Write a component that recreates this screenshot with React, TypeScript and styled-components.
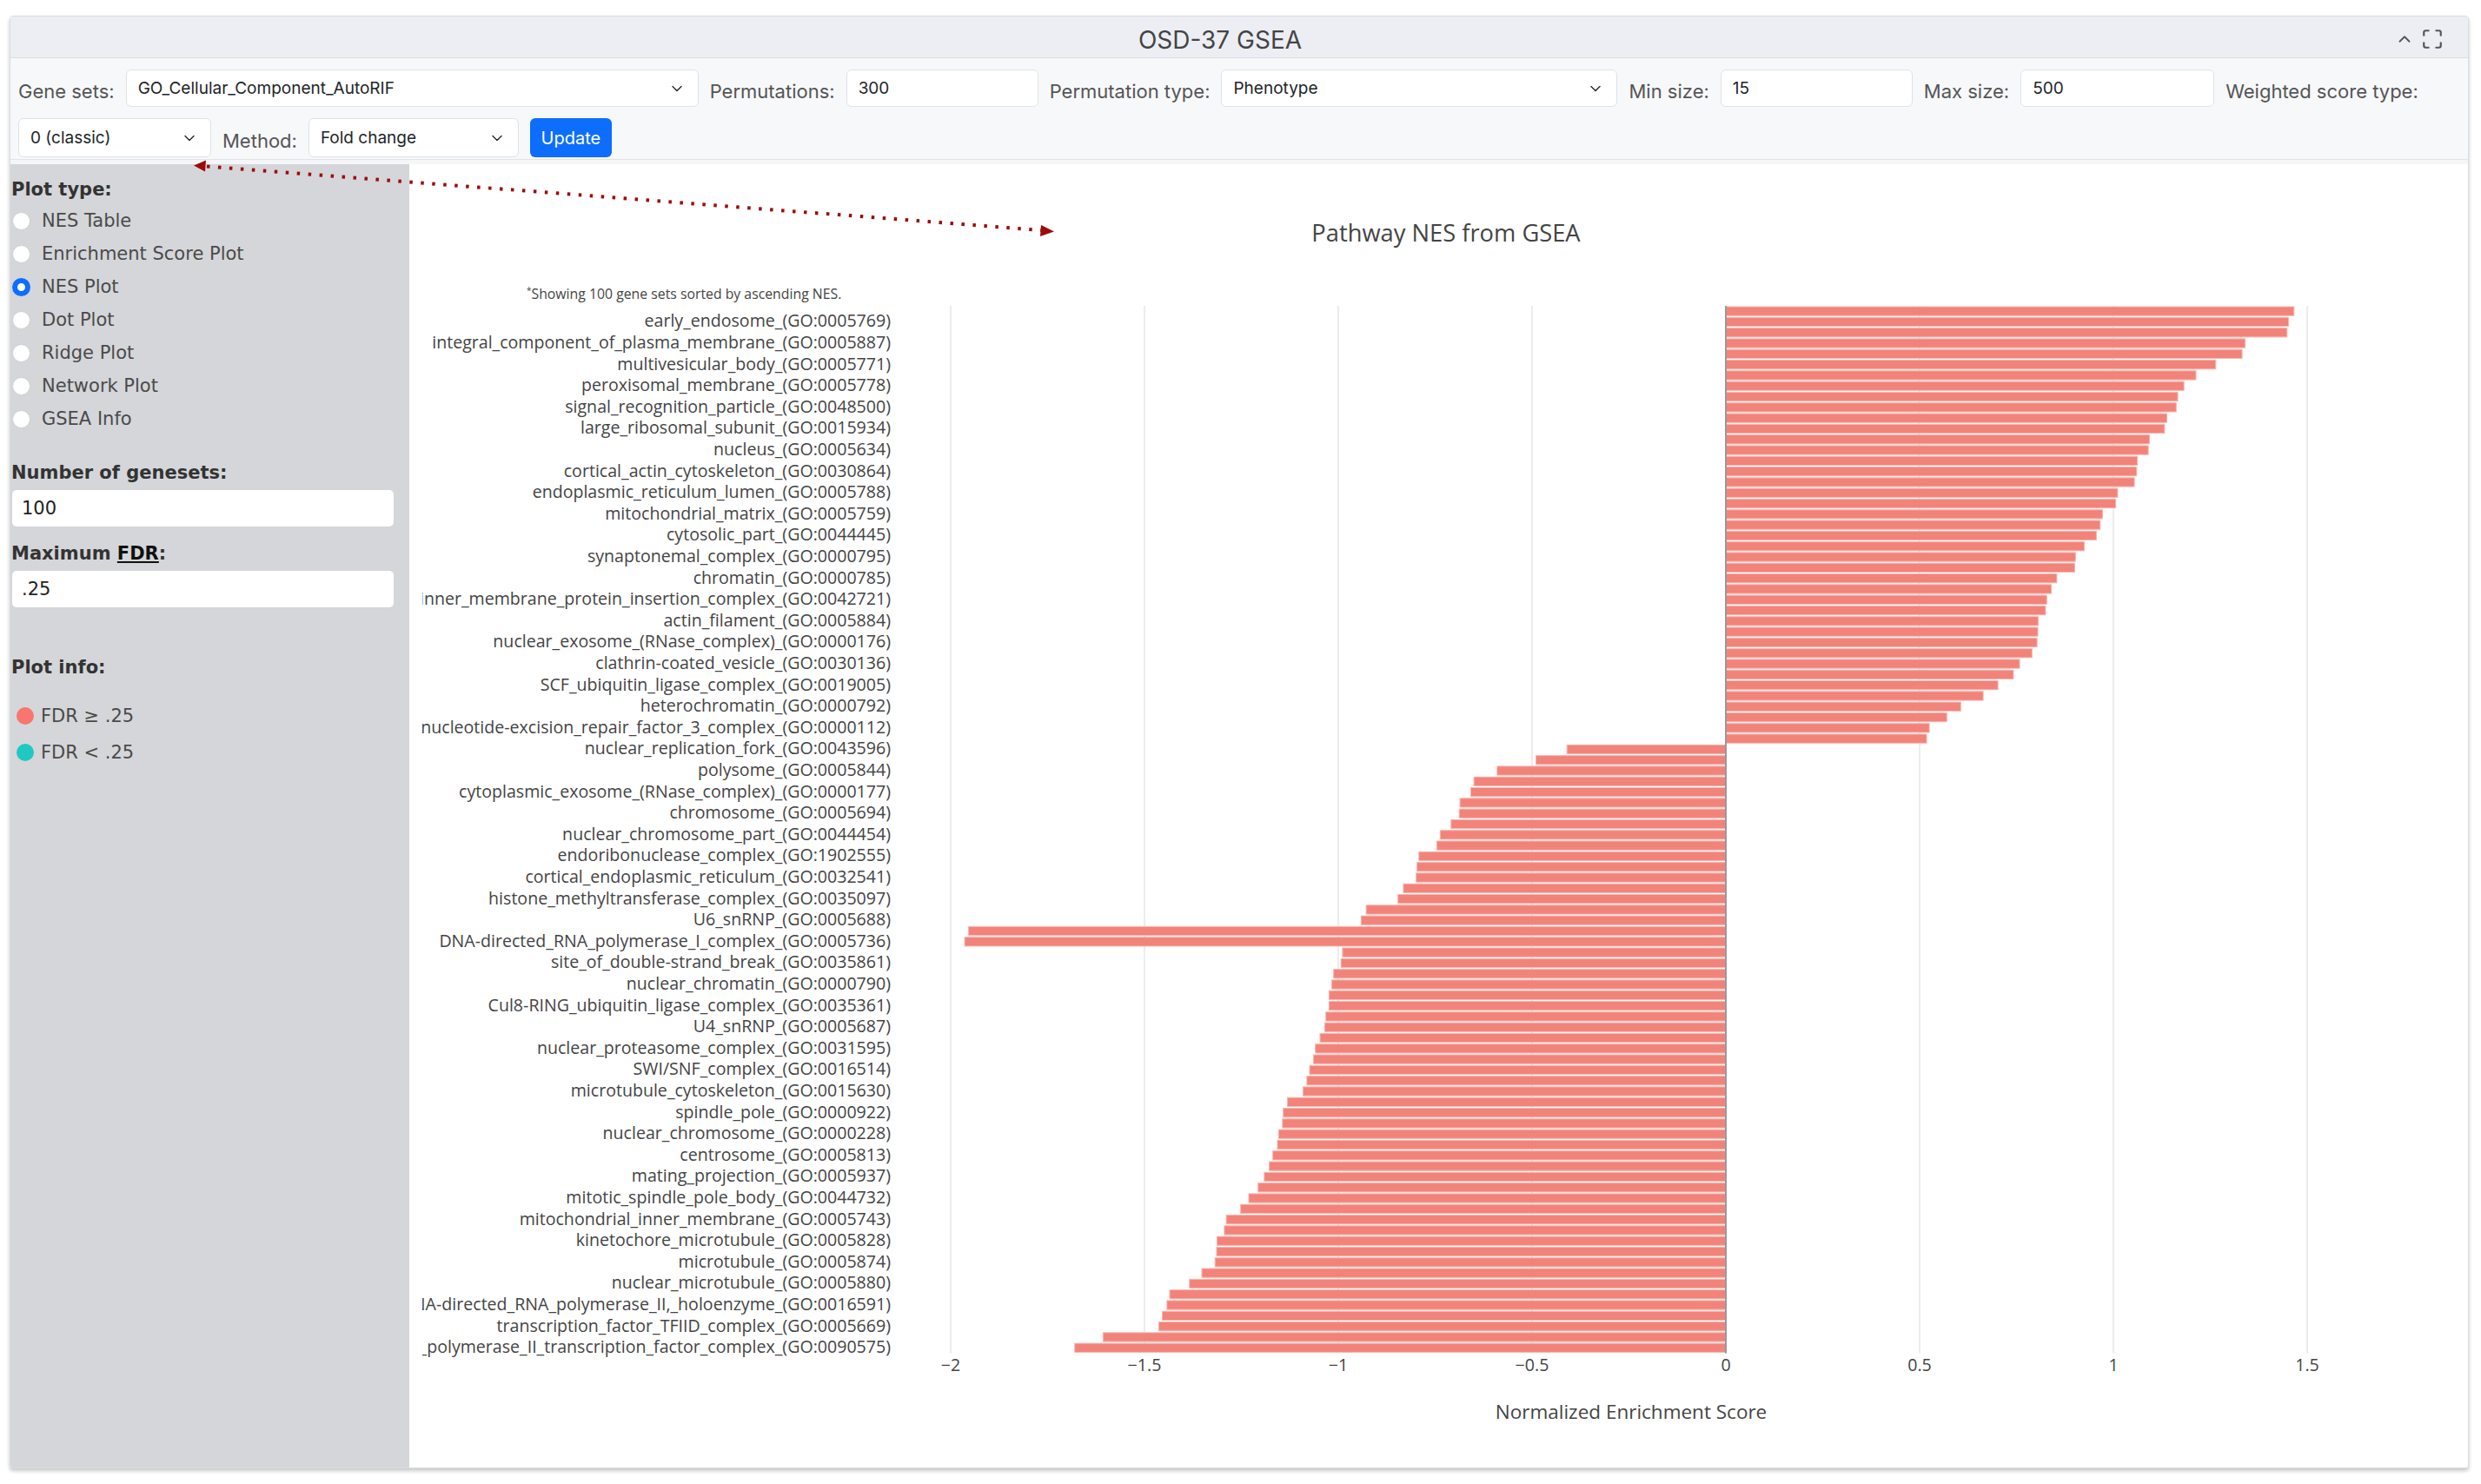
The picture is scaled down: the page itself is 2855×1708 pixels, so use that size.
import React from 'react';
import styled, { createGlobalStyle } from 'styled-components';
import { ChevronDown, ChevronUp, Maximize } from 'lucide-react';

const GlobalStyle = createGlobalStyle`
  html, body {
    margin: 0;
    padding: 0;
    background: #fff;
  }
  body {
    font-family: Inter, "Liberation Sans", sans-serif;
  }
  * {
    box-sizing: border-box;
  }
`;

// NES values, top bar first (ascending NES from the bottom)
const nes = [
  1.466, 1.452, 1.448, 1.34, 1.332, 1.264, 1.213, 1.182, 1.166, 1.162, 1.138, 1.132, 1.093, 1.09,
  1.062, 1.06, 1.054, 1.011, 1.006, 0.972, 0.966, 0.956, 0.925, 0.902, 0.9, 0.854, 0.84, 0.828,
  0.825, 0.806, 0.805, 0.803, 0.79, 0.758, 0.742, 0.702, 0.664, 0.606, 0.57, 0.525, 0.518,
  -0.41, -0.49, -0.59, -0.65, -0.658, -0.686, -0.688, -0.709, -0.737, -0.746, -0.792, -0.797,
  -0.799, -0.832, -0.846, -0.928, -0.941, -1.954, -1.964, -0.989, -0.993, -1.012, -1.017, -1.024,
  -1.024, -1.032, -1.035, -1.047, -1.059, -1.064, -1.074, -1.081, -1.091, -1.131, -1.142, -1.144,
  -1.154, -1.157, -1.169, -1.178, -1.191, -1.207, -1.231, -1.252, -1.289, -1.294, -1.313, -1.314,
  -1.318, -1.352, -1.384, -1.435, -1.442, -1.454, -1.463, -1.607, -1.68,
];

// every second bar gets a tick label, starting at the second bar from the top
const pathways = [
  'early_endosome_(GO:0005769)',
  'integral_component_of_plasma_membrane_(GO:0005887)',
  'multivesicular_body_(GO:0005771)',
  'peroxisomal_membrane_(GO:0005778)',
  'signal_recognition_particle_(GO:0048500)',
  'large_ribosomal_subunit_(GO:0015934)',
  'nucleus_(GO:0005634)',
  'cortical_actin_cytoskeleton_(GO:0030864)',
  'endoplasmic_reticulum_lumen_(GO:0005788)',
  'mitochondrial_matrix_(GO:0005759)',
  'cytosolic_part_(GO:0044445)',
  'synaptonemal_complex_(GO:0000795)',
  'chromatin_(GO:0000785)',
  'inner_membrane_protein_insertion_complex_(GO:0042721)',
  'actin_filament_(GO:0005884)',
  'nuclear_exosome_(RNase_complex)_(GO:0000176)',
  'clathrin-coated_vesicle_(GO:0030136)',
  'SCF_ubiquitin_ligase_complex_(GO:0019005)',
  'heterochromatin_(GO:0000792)',
  'nucleotide-excision_repair_factor_3_complex_(GO:0000112)',
  'nuclear_replication_fork_(GO:0043596)',
  'polysome_(GO:0005844)',
  'cytoplasmic_exosome_(RNase_complex)_(GO:0000177)',
  'chromosome_(GO:0005694)',
  'nuclear_chromosome_part_(GO:0044454)',
  'endoribonuclease_complex_(GO:1902555)',
  'cortical_endoplasmic_reticulum_(GO:0032541)',
  'histone_methyltransferase_complex_(GO:0035097)',
  'U6_snRNP_(GO:0005688)',
  'DNA-directed_RNA_polymerase_I_complex_(GO:0005736)',
  'site_of_double-strand_break_(GO:0035861)',
  'nuclear_chromatin_(GO:0000790)',
  'Cul8-RING_ubiquitin_ligase_complex_(GO:0035361)',
  'U4_snRNP_(GO:0005687)',
  'nuclear_proteasome_complex_(GO:0031595)',
  'SWI/SNF_complex_(GO:0016514)',
  'microtubule_cytoskeleton_(GO:0015630)',
  'spindle_pole_(GO:0000922)',
  'nuclear_chromosome_(GO:0000228)',
  'centrosome_(GO:0005813)',
  'mating_projection_(GO:0005937)',
  'mitotic_spindle_pole_body_(GO:0044732)',
  'mitochondrial_inner_membrane_(GO:0005743)',
  'kinetochore_microtubule_(GO:0005828)',
  'microtubule_(GO:0005874)',
  'nuclear_microtubule_(GO:0005880)',
  'DNA-directed_RNA_polymerase_II,_holoenzyme_(GO:0016591)',
  'transcription_factor_TFIID_complex_(GO:0005669)',
  'RNA_polymerase_II_transcription_factor_complex_(GO:0090575)',
];

const plotTypes = [
  'NES Table',
  'Enrichment Score Plot',
  'NES Plot',
  'Dot Plot',
  'Ridge Plot',
  'Network Plot',
  'GSEA Info',
];

const ticks = [
  {v: -2, t: '\u22122'},
  {v: -1.5, t: '\u22121.5'},
  {v: -1, t: '\u22121'},
  {v: -0.5, t: '\u22120.5'},
  {v: 0, t: '0'},
  {v: 0.5, t: '0.5'},
  {v: 1, t: '1'},
  {v: 1.5, t: '1.5'},
];

const ZERO = 1500;
const UNIT = 446;
const TOP = 163;
const PITCH = 12.3;
const xOf = (v: number) => ZERO + v * UNIT;

const Page = styled.div`
  width: 2855px;
  height: 1708px;
  padding: 18px 14px 18px 11px;
`;

const Card = styled.div`
  position: relative;
  height: 100%;
  display: flex;
  flex-direction: column;
  border: 1px solid #dadde3;
  border-radius: 4px;
  background: #f8f9fb;
  box-shadow: 0 3px 4px rgba(0, 0, 0, 0.22);
  overflow: hidden;
`;

const Header = styled.div`
  height: 48px;
  flex: none;
  display: flex;
  align-items: center;
  padding-right: 28px;
  background: #eceef4;
  border-bottom: 1px solid #dadde3;
`;

const Title = styled.div`
  flex: 1;
  text-align: center;
  font-size: 28px;
  color: #444;
  padding: 7px 0 0 40px;
`;

const HeaderIcons = styled.div`
  display: flex;
  align-items: center;
  gap: 8px;
  padding-top: 4px;
  color: #555;
`;

const Controls = styled.div`
  height: 117px;
  flex: none;
  padding: 13px 9px 0;
  display: flex;
  flex-direction: column;
  gap: 13px;
  background: #f7f8fa;
  border-bottom: 1px solid #e1e3e8;
`;

const ControlRow = styled.div`
  display: flex;
  align-items: center;
  gap: 13px;
`;

const Label = styled.span`
  font-size: 22px;
  color: #555;
  padding-top: 7px;
  white-space: nowrap;
`;

const Field = styled.div<{$w: number; $h?: number}>`
  width: ${p => p.$w}px;
  height: ${p => p.$h || 43}px;
  flex: none;
  display: flex;
  align-items: center;
  justify-content: space-between;
  padding: 0 14px 0 13px;
  background: #fff;
  border: 1px solid #dee2e6;
  border-radius: 6px;
  font-size: 19px;
  color: #212529;
  white-space: nowrap;
`;

const UpdateButton = styled.button`
  width: 94px;
  height: 45px;
  border: none;
  border-radius: 6px;
  background: #0d6efd;
  color: #fff;
  font-family: Inter, "Liberation Sans", sans-serif;
  font-size: 20px;
`;

const Gap = styled.div`
  height: 5px;
  flex: none;
  background: #f5f6f8;
`;

const Body = styled.div`
  flex: 1;
  display: flex;
  min-height: 0;
`;

const Sidebar = styled.div`
  width: 459px;
  flex: none;
  background: #d5d6d9;
  padding: 16px 0 0 1px;
  font-family: "DejaVu Sans", Verdana, sans-serif;
  font-size: 21px;
  color: #4a4a4a;
`;

const Heading = styled.div<{$mt?: number}>`
  font-weight: bold;
  color: #333;
  line-height: 26px;
  margin-top: ${p => p.$mt || 0}px;
`;

const Underlined = styled.span`
  color: #111;
  text-decoration: underline;
`;

const RadioList = styled.div`
  margin-top: 4px;
`;

const RadioRow = styled.label`
  height: 38px;
  display: flex;
  align-items: center;
  gap: 13px;
  padding-left: 1px;
`;

const RadioDot = styled.span<{$on?: boolean}>`
  width: 21px;
  height: 21px;
  border-radius: 50%;
  flex: none;
  background: #fff;
  border: ${p => (p.$on ? '6px solid #0d6efd' : '1px solid #d0d0d0')};
`;

const SideInput = styled.div`
  width: 439px;
  height: 42px;
  margin: 7px 0 0 1px;
  padding-left: 11px;
  display: flex;
  align-items: center;
  background: #fff;
  border-radius: 5px;
  color: #222;
`;

const LegendList = styled.div`
  margin-top: 22px;
`;

const LegendRow = styled.div`
  height: 42px;
  display: flex;
  align-items: center;
  gap: 8px;
  padding-left: 6px;
`;

const LegendDot = styled.span<{$c: string}>`
  width: 20px;
  height: 20px;
  border-radius: 50%;
  background: ${p => p.$c};
`;

const Main = styled.div`
  flex: 1;
  background: #fff;
  padding-left: 15px;
  overflow: hidden;
`;

const ChartText = styled.text`
  font-family: "Open Sans", "DejaVu Sans", sans-serif;
  fill: #444;
`;

const Overlay = styled.svg`
  position: absolute;
  left: 0;
  top: 0;
  pointer-events: none;
`;

const NesChart: React.FC = () => (
  <svg width={2356} height={1500}>
    <ChartText x={1178} y={89} textAnchor="middle" fontSize={27.3}>
      Pathway NES from GSEA
    </ChartText>
    <ChartText x={120} y={155} fontSize={15.8}>
      <tspan fontSize={10} dy={-6}>*</tspan>
      <tspan dy={6}>Showing 100 gene sets sorted by ascending NES.</tspan>
    </ChartText>
    {ticks
      .filter(t => t.v !== 0)
      .map(t => (
        <line
          key={t.v}
          x1={xOf(t.v)}
          x2={xOf(t.v)}
          y1={TOP}
          y2={TOP + nes.length * PITCH}
          stroke="#ececec"
          strokeWidth={2}
        />
      ))}
    {nes.map((v, i) => (
      <rect
        key={i}
        x={Math.min(ZERO, xOf(v))}
        y={TOP + i * PITCH + 1}
        width={Math.abs(v) * UNIT}
        height={PITCH - 2}
        fill="#f2837a"
        stroke="#f7b8b2"
        strokeWidth={1}
      />
    ))}
    <line x1={ZERO} x2={ZERO} y1={TOP} y2={TOP + nes.length * PITCH} stroke="#999" strokeWidth={2} />
    {pathways.map((p, i) => (
      <ChartText key={p} x={539} y={TOP + (2 * i + 1.5) * PITCH + 6} textAnchor="end" fontSize={19.6}>
        {p}
      </ChartText>
    ))}
    {ticks.map(t => (
      <ChartText key={t.t} x={xOf(t.v)} y={1389} textAnchor="middle" fontSize={19.6}>
        {t.t}
      </ChartText>
    ))}
    <ChartText x={1391} y={1444} textAnchor="middle" fontSize={22.5}>
      Normalized Enrichment Score
    </ChartText>
  </svg>
);

const App: React.FC = () => {
  return (
    <Page>
      <GlobalStyle />
      <Card>
        <Header>
          <Title>OSD-37 GSEA</Title>
          <HeaderIcons>
            <ChevronUp size={22} strokeWidth={2} />
            <Maximize size={26} strokeWidth={2} />
          </HeaderIcons>
        </Header>
        <Controls>
          <ControlRow>
            <Label>Gene sets:</Label>
            <Field $w={659}>
              GO_Cellular_Component_AutoRIF
              <ChevronDown size={20} strokeWidth={1.6} />
            </Field>
            <Label>Permutations:</Label>
            <Field $w={221}>300</Field>
            <Label>Permutation type:</Label>
            <Field $w={456}>
              Phenotype
              <ChevronDown size={20} strokeWidth={1.6} />
            </Field>
            <Label>Min size:</Label>
            <Field $w={221}>15</Field>
            <Label>Max size:</Label>
            <Field $w={223}>500</Field>
            <Label>Weighted score type:</Label>
          </ControlRow>
          <ControlRow>
            <Field $w={222} $h={45}>
              0 (classic)
              <ChevronDown size={20} strokeWidth={1.6} />
            </Field>
            <Label>Method:</Label>
            <Field $w={242} $h={45}>
              Fold change
              <ChevronDown size={20} strokeWidth={1.6} />
            </Field>
            <UpdateButton>Update</UpdateButton>
          </ControlRow>
        </Controls>
        <Gap />
        <Body>
          <Sidebar>
            <Heading>Plot type:</Heading>
            <RadioList>
              {plotTypes.map(t => (
                <RadioRow key={t}>
                  <RadioDot $on={t === 'NES Plot'} />
                  {t}
                </RadioRow>
              ))}
            </RadioList>
            <Heading $mt={30}>Number of genesets:</Heading>
            <SideInput>100</SideInput>
            <Heading $mt={18}>
              Maximum <Underlined>FDR</Underlined>:
            </Heading>
            <SideInput>.25</SideInput>
            <Heading $mt={56}>Plot info:</Heading>
            <LegendList>
              <LegendRow>
                <LegendDot $c="#f8766d" />
                FDR ≥ .25
              </LegendRow>
              <LegendRow>
                <LegendDot $c="#1fc8c0" />
                FDR &lt; .25
              </LegendRow>
            </LegendList>
          </Sidebar>
          <Main>
            <NesChart />
          </Main>
        </Body>
        <Overlay width={2828} height={400}>
          <line
            x1={226}
            y1={172.6}
            x2={1186}
            y2={246}
            stroke="#9e0b0b"
            strokeWidth={4}
            strokeDasharray="3.5 9.5"
          />
          <polygon points="211,171.5 225,165.5 224,178.5" fill="#9e0b0b" />
          <polygon points="1201,247.5 1186,240 1185,253" fill="#9e0b0b" />
        </Overlay>
      </Card>
    </Page>
  );
};

export default App;
